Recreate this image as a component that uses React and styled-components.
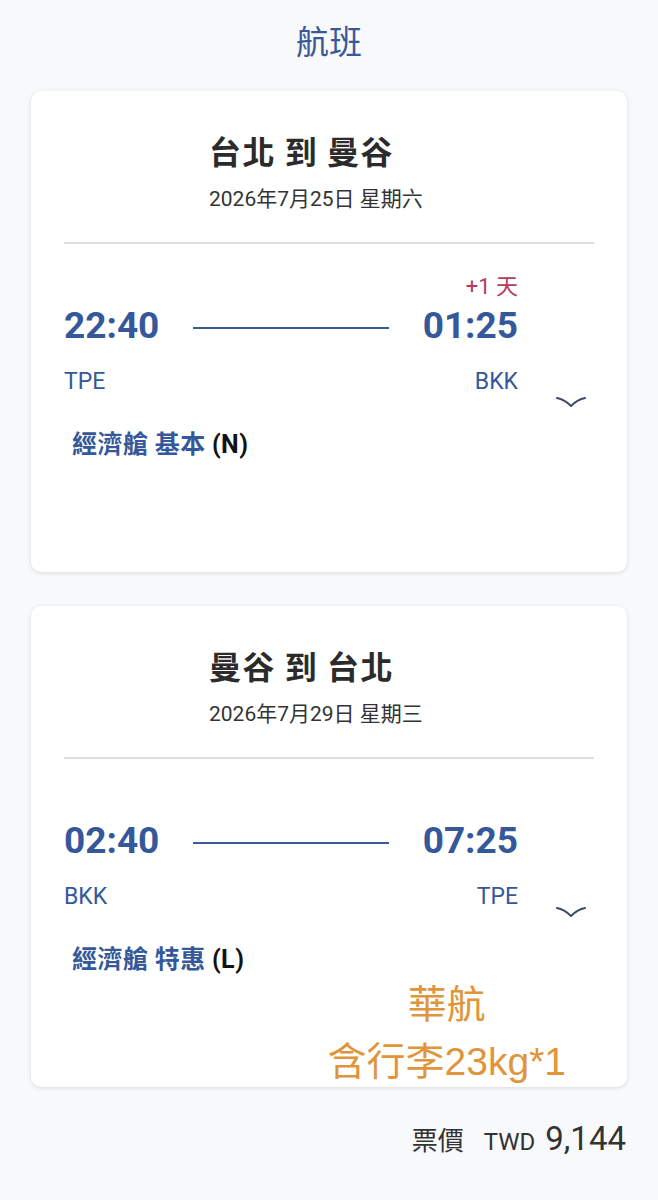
import React from 'react'
import styled, { createGlobalStyle } from 'styled-components'

const GlobalStyle = createGlobalStyle`
  html, body {
    margin: 0;
    padding: 0;
    background: #f8f9fb;
  }
  body {
    font-family: Roboto, "Noto Sans CJK TC", sans-serif;
  }
`;

const Page = styled.div`
  width: 658px;
  min-height: 1200px;
  background: #f8f9fb;
  box-sizing: border-box;
`;

const Header = styled.div`
  height: 84px;
  line-height: 80px;
  text-align: center;
  font-family: "Noto Sans CJK TC", sans-serif;
  font-size: 33px;
  color: #3b5998;
`;

const List = styled.div`
  display: flex;
  flex-direction: column;
  gap: 34px;
  margin: 7px 31px 0;
`;

const Card = styled.div`
  height: 481px;
  background: #fff;
  border-radius: 10px;
  box-shadow: 0 1px 4px rgba(0, 0, 0, 0.13);
  box-sizing: border-box;
`;

const RouteHead = styled.div`
  padding: 39px 0 0 178px;
`;

const RouteTitle = styled.div`
  font-family: "Noto Sans CJK TC", sans-serif;
  font-weight: 700;
  font-size: 32px;
  line-height: 40px;
  color: #2b2b2b;
  letter-spacing: 1.5px;
`;

const RouteDate = styled.div`
  margin-top: 14px;
  font-family: Roboto, "Noto Sans CJK TC", sans-serif;
  font-size: 21px;
  line-height: 30px;
  color: #333;
`;

const Divider = styled.div`
  margin: 28px 33px 0;
  height: 2px;
  background: #dedede;
`;

const Segment = styled.div`
  display: flex;
  padding: 0 41px 0 33px;
`;

const Body = styled.div`
  flex: 0 0 454px;
`;

const DayShift = styled.div`
  margin-top: 31px;
  height: 24px;
  line-height: 24px;
  text-align: right;
  font-family: Roboto, "Noto Sans CJK TC", sans-serif;
  font-size: 22px;
  color: #b53a5c;
  visibility: ${({ $show }) => ($show ? 'visible' : 'hidden')};
`;

const TimesRow = styled.div`
  display: flex;
  align-items: center;
  margin-top: 5px;
  height: 44px;
`;

const Time = styled.div`
  font-family: Roboto, sans-serif;
  font-weight: 700;
  font-size: 37px;
  line-height: 44px;
  color: #34589a;
`;

const Track = styled.div`
  flex: 1;
  height: 2px;
  margin: 4px 34px 0;
  background: #3b5c9a;
`;

const CodesRow = styled.div`
  display: flex;
  justify-content: space-between;
  margin-top: 20px;
  font-family: Roboto, sans-serif;
  font-size: 23px;
  line-height: 28px;
  color: #34589a;
`;

const ClassLabel = styled.div`
  margin-top: 32px;
  padding-left: 8px;
  font-family: "Noto Sans CJK TC", sans-serif;
  font-weight: 700;
  font-size: 25px;
  line-height: 28px;
  letter-spacing: 0.5px;
  color: #34589a;

  span {
    font-family: Roboto, sans-serif;
    color: #111;
  }
`;

const ChevronCell = styled.div`
  margin-left: auto;
  padding-top: ${({ $top }) => $top}px;
`;

const Note = styled.div`
  width: fit-content;
  margin: 2px 61px 0 auto;
  text-align: center;
  font-family: "Liberation Sans", "Noto Sans CJK TC", sans-serif;
  font-size: 39px;
  line-height: 57px;
  color: #e0953b;
`;

const PriceRow = styled.div`
  display: flex;
  justify-content: flex-end;
  align-items: baseline;
  padding: 32px 32px 0 0;
  color: #333;
`;

const PriceLabel = styled.span`
  font-family: "Noto Sans CJK TC", sans-serif;
  font-size: 26px;
  margin-right: 20px;
`;

const Currency = styled.span`
  font-family: Roboto, sans-serif;
  font-size: 24px;
  margin-right: 10px;
`;

const Amount = styled.span`
  font-family: Roboto, sans-serif;
  font-size: 33px;
`;

const Chevron = () => (
  <svg width="30" height="14" viewBox="0 0 30 14">
    <path
      d="M1 3 C7 4 11 7 15 11 C19 7 23 4 29 3"
      fill="none"
      stroke="#3d4a66"
      strokeWidth="2"
      strokeLinecap="round"
      strokeLinejoin="round"
    />
  </svg>
);

const flights = [
  {
    route: '台北 到 曼谷',
    date: '2026年7月25日 星期六',
    dep: '22:40',
    arr: '01:25',
    from: 'TPE',
    to: 'BKK',
    plusDay: true,
    fare: '經濟艙 基本',
    code: '(N)',
    chevronTop: 150,
  },
  {
    route: '曼谷 到 台北',
    date: '2026年7月29日 星期三',
    dep: '02:40',
    arr: '07:25',
    from: 'BKK',
    to: 'TPE',
    plusDay: false,
    fare: '經濟艙 特惠',
    code: '(L)',
    chevronTop: 145,
    note: ['華航', '含行李23kg*1'],
  },
];

const FlightCard = ({ f }) => (
  <Card>
    <RouteHead>
      <RouteTitle>{f.route}</RouteTitle>
      <RouteDate>{f.date}</RouteDate>
    </RouteHead>
    <Divider />
    <Segment>
      <Body>
        <DayShift $show={f.plusDay}>+1 天</DayShift>
        <TimesRow>
          <Time>{f.dep}</Time>
          <Track />
          <Time>{f.arr}</Time>
        </TimesRow>
        <CodesRow>
          <span>{f.from}</span>
          <span>{f.to}</span>
        </CodesRow>
        <ClassLabel>
          {f.fare} <span>{f.code}</span>
        </ClassLabel>
      </Body>
      <ChevronCell $top={f.chevronTop}>
        <Chevron />
      </ChevronCell>
    </Segment>
    {f.note && (
      <Note>
        {f.note.map((line) => (
          <div key={line}>{line}</div>
        ))}
      </Note>
    )}
  </Card>
);

const App = () => (
  <Page>
    <GlobalStyle />
    <Header>航班</Header>
    <List>
      {flights.map((f) => (
        <FlightCard key={f.route} f={f} />
      ))}
    </List>
    <PriceRow>
      <PriceLabel>票價</PriceLabel>
      <Currency>TWD</Currency>
      <Amount>9,144</Amount>
    </PriceRow>
  </Page>
);

export default App
